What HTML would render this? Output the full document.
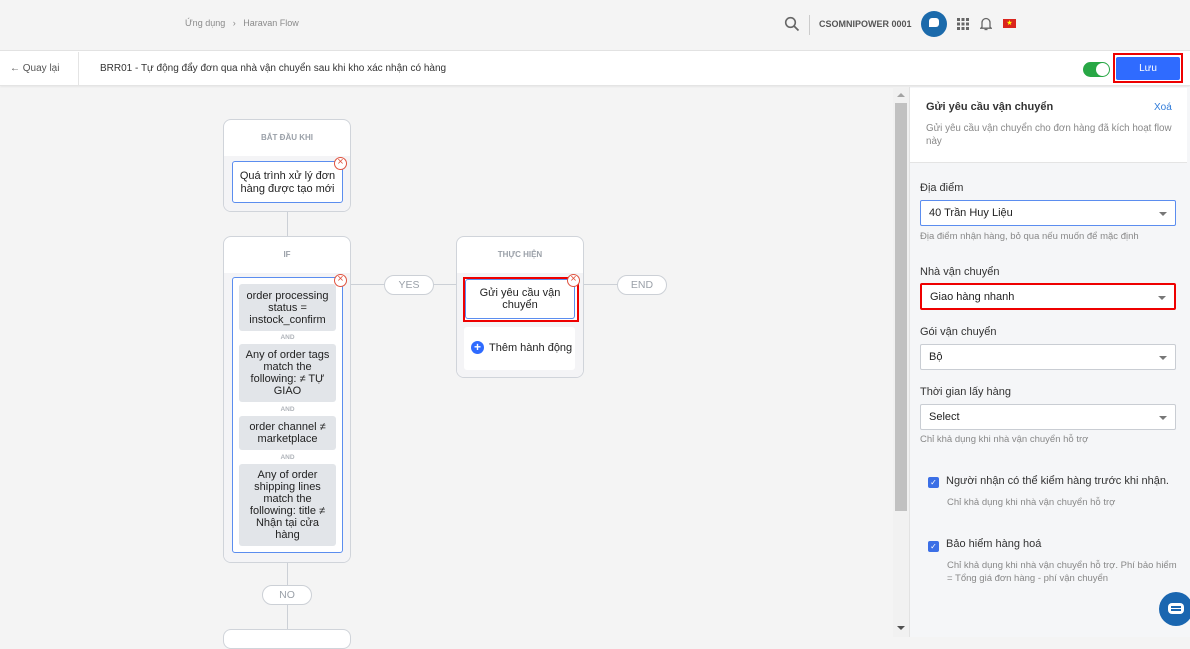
<!DOCTYPE html>
<html><head><meta charset="utf-8"><style>
*{box-sizing:border-box;margin:0;padding:0}
body{width:1190px;height:637px;overflow:hidden;background:#f4f4f4;font-family:"Liberation Sans",Arial,sans-serif;position:relative;color:#222}
.a{position:absolute}
.top{left:0;top:0;width:1190px;height:51px;background:#f4f4f4;border-bottom:1px solid #e2e2e2}
.bar{left:0;top:51px;width:1190px;height:35px;background:#fff;border-bottom:1px solid #e4e4e4;box-shadow:0 1px 2px rgba(0,0,0,.06)}
.node{background:#fff;border:1px solid #d0d4da;border-radius:8px}
.hd{font-size:8px;font-weight:bold;color:#9aa0a8;text-align:center}
.card{background:#fff;border:1px solid #5b8def;border-radius:3px}
.cond{left:239px;width:97px;background:#e2e5e9;border-radius:3px;font-size:11px;line-height:12px;text-align:center;color:#222;display:flex;align-items:center;justify-content:center;white-space:nowrap}
.and{left:232px;width:111px;text-align:center;font-size:6.5px;font-weight:bold;color:#b0b4ba}
.pill{background:#fff;border:1px solid #ccd0d6;border-radius:10px;font-size:10.5px;color:#9aa0a8;text-align:center;line-height:18px;height:20px}
.x{width:13px;height:13px;border:1.5px solid #e0533f;border-radius:50%;background:#fff;color:#e0533f;font-size:11px;line-height:9px;text-align:center}
.lbl{left:920px;font-size:11px;color:#333}
.sel{left:920px;width:256px;height:26px;background:#fff;border:1px solid #c9cdd3;border-radius:2px;font-size:11px;line-height:24px;padding-left:8px;color:#222}
.sel:after{content:"";position:absolute;right:8px;top:11px;border-left:4px solid transparent;border-right:4px solid transparent;border-top:4px solid #777}
.hint{font-size:9.5px;color:#888}
.cb{width:11px;height:11px;background:#3b6fe6;border-radius:2px;color:#fff;font-size:8px;line-height:11px;text-align:center}
</style></head><body>
<div class="a top"></div>
<div class="a" style="left:185px;top:18px;font-size:9px;color:#8a8a8a">Ứng dụng &nbsp;&nbsp;›&nbsp;&nbsp; Haravan Flow</div>
<svg class="a" style="left:784px;top:16px" width="16" height="16" viewBox="0 0 16 16"><circle cx="6.5" cy="6.5" r="4.8" fill="none" stroke="#666" stroke-width="1.6"/><path d="M10 10l4.5 4.5" stroke="#666" stroke-width="1.8"/></svg>
<div class="a" style="left:809px;top:15px;width:1px;height:20px;background:#ccc"></div>
<div class="a" style="left:819px;top:19px;font-size:9px;font-weight:bold;color:#555">CSOMNIPOWER 0001</div>
<div class="a" style="left:921px;top:11px;width:26px;height:26px;border-radius:50%;background:#1b6aab"><div class="a" style="left:8px;top:7px;width:10px;height:9px;background:#fff;border-radius:3px 3px 3px 0"></div></div>
<svg class="a" style="left:957px;top:18px" width="12" height="12"><g fill="#666"><rect x="0" y="0" width="3" height="3"/><rect x="4.5" y="0" width="3" height="3"/><rect x="9" y="0" width="3" height="3"/><rect x="0" y="4.5" width="3" height="3"/><rect x="4.5" y="4.5" width="3" height="3"/><rect x="9" y="4.5" width="3" height="3"/><rect x="0" y="9" width="3" height="3"/><rect x="4.5" y="9" width="3" height="3"/><rect x="9" y="9" width="3" height="3"/></g></svg>
<svg class="a" style="left:980px;top:16px" width="12" height="15" viewBox="0 0 12 15"><path d="M2 11V6.5a4 4 0 018 0V11l1.2 1.2H.8z" fill="none" stroke="#666" stroke-width="1.3"/><path d="M4.5 13.5h3" stroke="#666" stroke-width="1.3"/></svg>
<div class="a" style="left:1003px;top:19px;width:13px;height:9px;background:#da251d;color:#ff0;font-size:7px;line-height:9px;text-align:center">★</div>

<div class="a bar"></div>
<div class="a" style="left:10px;top:63px;font-size:10px;color:#555">← Quay lại</div>
<div class="a" style="left:78px;top:52px;width:1px;height:34px;background:#e4e4e4"></div>
<div class="a" style="left:100px;top:63px;font-size:10px;color:#333">BRR01 - Tự động đẩy đơn qua nhà vận chuyển sau khi kho xác nhận có hàng</div>
<div class="a" style="left:1083px;top:62px;width:27px;height:15px;border-radius:8px;background:#28a745"><div class="a" style="left:13px;top:1px;width:13px;height:13px;border-radius:50%;background:#fff"></div></div>
<div class="a" style="left:1113px;top:53px;width:70px;height:30px;border:2px solid #e00"></div>
<div class="a" style="left:1116px;top:57px;width:64px;height:23px;background:#2f6bff;border-radius:2px;color:#fff;font-size:10px;text-align:center;line-height:23px">Lưu</div>

<div class="a" style="left:893px;top:87px;width:16px;height:550px;background:#f1f1f1"></div>
<div class="a" style="left:895px;top:103px;width:12px;height:408px;background:#c1c1c1"></div>
<div class="a" style="left:897px;top:93px;border-left:4px solid transparent;border-right:4px solid transparent;border-bottom:4px solid #a3a3a3"></div>
<div class="a" style="left:897px;top:626px;border-left:4px solid transparent;border-right:4px solid transparent;border-top:4px solid #505050"></div>

<div class="a" style="left:287px;top:211px;width:1px;height:25px;background:#ccd0d6"></div>
<div class="a" style="left:287px;top:562px;width:1px;height:67px;background:#ccd0d6"></div>
<div class="a" style="left:350px;top:284px;width:317px;height:1px;background:#ccd0d6"></div>

<div class="a node" style="left:223px;top:119px;width:128px;height:93px;overflow:hidden"><div class="a" style="left:0;top:36px;width:128px;height:57px;background:#f4f4f6"></div></div>
<div class="a hd" style="left:223px;top:133px;width:128px">BẮT ĐẦU KHI</div>
<div class="a card" style="left:232px;top:161px;width:111px;height:42px;font-size:11px;line-height:13px;text-align:center;padding:8px 4px 0">Quá trình xử lý đơn hàng được tạo mới</div>
<div class="a x" style="left:334px;top:157px">×</div>

<div class="a node" style="left:223px;top:236px;width:128px;height:327px;overflow:hidden"><div class="a" style="left:0;top:36px;width:128px;height:291px;background:#f4f4f6"></div></div>
<div class="a hd" style="left:223px;top:250px;width:128px">IF</div>
<div class="a card" style="left:232px;top:277px;width:111px;height:276px"></div>
<div class="a x" style="left:334px;top:274px">×</div>
<div class="a cond" style="top:284px;height:47px">order processing<br>status =<br>instock_confirm</div>
<div class="a and" style="top:334px">AND</div>
<div class="a cond" style="top:344px;height:58px">Any of order tags<br>match the<br>following: ≠ TỰ<br>GIAO</div>
<div class="a and" style="top:406px">AND</div>
<div class="a cond" style="top:416px;height:34px">order channel ≠<br>marketplace</div>
<div class="a and" style="top:454px">AND</div>
<div class="a cond" style="top:464px;height:82px">Any of order<br>shipping lines<br>match the<br>following: title ≠<br>Nhận tại cửa<br>hàng</div>

<div class="a pill" style="left:384px;top:275px;width:50px">YES</div>
<div class="a pill" style="left:617px;top:275px;width:50px">END</div>
<div class="a pill" style="left:262px;top:585px;width:50px">NO</div>
<div class="a node" style="left:223px;top:629px;width:128px;height:20px"></div>

<div class="a node" style="left:456px;top:236px;width:128px;height:142px;overflow:hidden"><div class="a" style="left:0;top:36px;width:128px;height:106px;background:#f4f4f6"></div></div>
<div class="a hd" style="left:456px;top:250px;width:128px">THỰC HIỆN</div>
<div class="a" style="left:463px;top:277px;width:116px;height:45px;border:2px solid #e00;background:#fff"></div>
<div class="a card" style="left:465px;top:279px;width:110px;height:40px;font-size:11px;line-height:12px;text-align:center;padding:7px 10px 0">Gửi yêu cầu vận chuyển</div>
<div class="a x" style="left:567px;top:274px">×</div>
<div class="a" style="left:464px;top:327px;width:111px;height:43px;background:#fff;border-radius:3px;font-size:11px;line-height:43px;padding-left:25px">Thêm hành động</div>
<div class="a" style="left:471px;top:341px;width:13px;height:13px;border-radius:50%;background:#2f6bff;color:#fff;font-size:12px;line-height:13px;text-align:center;font-weight:bold">+</div>

<div class="a" style="left:909px;top:87px;width:281px;height:550px;background:#f5f6f8;border-left:1px solid #e2e2e2"></div>
<div class="a" style="left:910px;top:88px;width:277px;height:75px;background:#fff;border-bottom:1px solid #e4e4e4"></div>
<div class="a" style="left:926px;top:101px;font-size:11px;font-weight:bold;color:#333">Gửi yêu cầu vận chuyển</div>
<div class="a" style="left:1154px;top:102px;font-size:10px;color:#2f7bd9">Xoá</div>
<div class="a hint" style="left:926px;top:122px;line-height:13px;font-size:9.8px;white-space:nowrap">Gửi yêu cầu vận chuyển cho đơn hàng đã kích hoạt flow<br>này</div>

<div class="a lbl" style="top:182px">Địa điểm</div>
<div class="a sel" style="top:200px;border-color:#5b8def">40 Trần Huy Liệu</div>
<div class="a hint" style="left:920px;top:231px">Địa điểm nhận hàng, bỏ qua nếu muốn để mặc định</div>
<div class="a lbl" style="top:266px">Nhà vận chuyển</div>
<div class="a sel" style="top:283px;height:27px;border:2px solid #e00">Giao hàng nhanh</div>
<div class="a lbl" style="top:326px">Gói vận chuyển</div>
<div class="a sel" style="top:344px">Bộ</div>
<div class="a lbl" style="top:386px">Thời gian lấy hàng</div>
<div class="a sel" style="top:404px">Select</div>
<div class="a hint" style="left:920px;top:434px">Chỉ khả dụng khi nhà vận chuyển hỗ trợ</div>

<div class="a cb" style="left:928px;top:477px">✓</div>
<div class="a" style="left:946px;top:475px;font-size:11px;color:#333">Người nhận có thể kiểm hàng trước khi nhận.</div>
<div class="a hint" style="left:947px;top:497px">Chỉ khả dụng khi nhà vận chuyển hỗ trợ</div>
<div class="a cb" style="left:928px;top:541px">✓</div>
<div class="a" style="left:946px;top:538px;font-size:11px;color:#333">Bảo hiểm hàng hoá</div>
<div class="a hint" style="left:947px;top:559px;width:235px;line-height:13px;white-space:nowrap">Chỉ khả dụng khi nhà vận chuyển hỗ trợ. Phí bảo hiểm<br>= Tổng giá đơn hàng - phí vận chuyển</div>

<div class="a" style="left:1159px;top:592px;width:34px;height:34px;border-radius:50%;background:#1a66b0"></div>
<div class="a" style="left:1168px;top:603px;width:16px;height:11px;border-radius:4px;background:#fff"><div class="a" style="left:3px;top:3px;width:10px;height:1.5px;background:#1a66b0"></div><div class="a" style="left:3px;top:6px;width:10px;height:1.5px;background:#1a66b0"></div></div>
</body></html>
